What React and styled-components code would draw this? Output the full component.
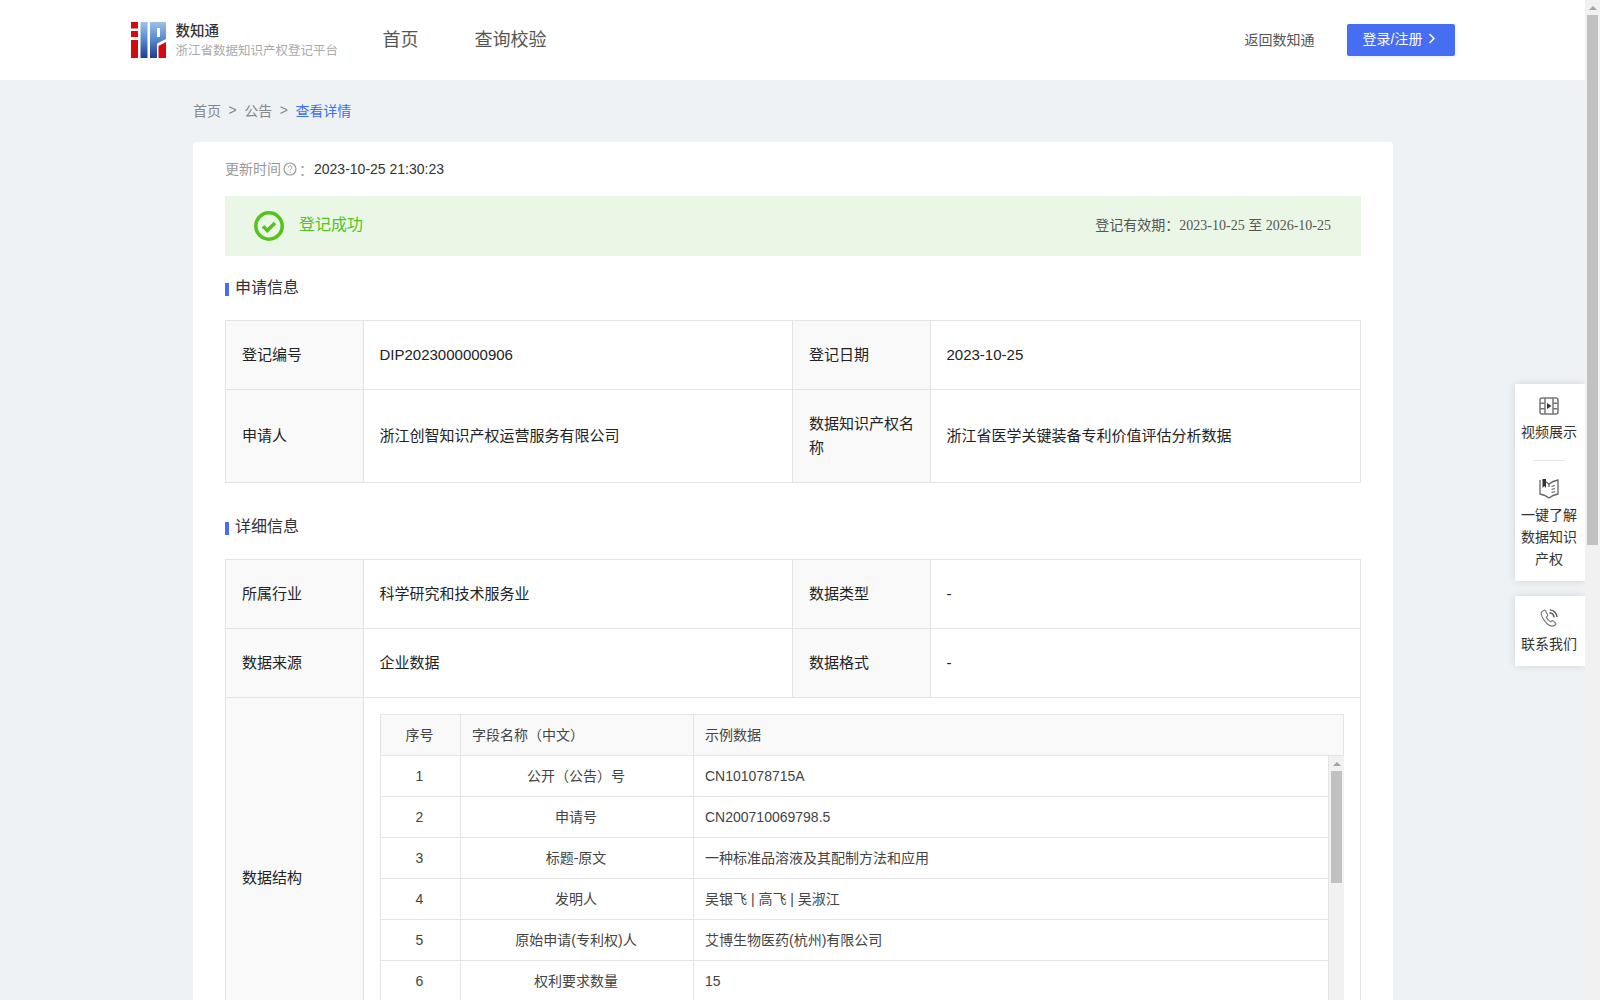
import React from 'react';
import styled, { createGlobalStyle } from 'styled-components';

const Global = createGlobalStyle`
  html, body { margin: 0; padding: 0; height: 100%; overflow: hidden; }
  body { font-family: "Liberation Sans", "Noto Sans CJK SC", sans-serif; color: #333; }
  #root { height: 100%; }
`;
const Shell = styled.div`display: flex; height: 1000px; overflow: hidden; background: #eef2f5;`;
const Page = styled.div`position: relative; flex: 1; min-width: 0; height: 1000px; overflow: hidden;`;
const PageBar = styled.div`flex: none; width: 15px; background: #f1f1f1; display: flex; flex-direction: column; align-items: center;`;
const ArrowBox = styled.div`height: 15px; width: 100%; flex: none; display: flex; align-items: center; justify-content: center;`;
const UpArrow = styled.i`width: 0; height: 0; border-left: 4px solid transparent; border-right: 4px solid transparent; border-bottom: 4px solid ${p => p.$c};`;
const PageThumb = styled.div`width: 11px; height: 530px; background: #c1c1c1;`;
const Header = styled.header`height: 80px; background: #fff; display: flex; justify-content: center;`;
const HeaderInner = styled.div`width: 1324px; display: flex; align-items: center; box-sizing: border-box;`;
const Brand = styled.div`display: flex; align-items: center; gap: 10px; width: 252px; flex: none;`;
const BrandText = styled.div`display: flex; flex-direction: column; white-space: nowrap; padding-top: 2px;`;
const BrandName = styled.div`font-size: 14.5px; line-height: 20px; color: #333; font-weight: 500;`;
const BrandSub = styled.div`font-size: 12.5px; line-height: 21px; color: #aaa;`;
const Nav = styled.nav`display: flex; gap: 56px; flex: 1; padding-bottom: 4px;`;
const NavLink = styled.a`font-size: 18px; color: #555;`;
const BackLink = styled.a`font-size: 14px; color: #555; margin-right: 32px; padding-bottom: 2px;`;
const LoginBtn = styled.button`width: 108px; height: 32px; padding: 0 2px 4px 0; border: 0; border-radius: 2px; background: #456ef2; color: #fff; font: 14px "Liberation Sans", "Noto Sans CJK SC", sans-serif; display: flex; align-items: center; justify-content: center; gap: 6px; box-shadow: 0 2px 4px rgba(69,110,242,.1);`;
const Main = styled.main`width: 1200px; margin-left: 193px;`;
const Crumbs = styled.div`height: 62px; box-sizing: border-box; padding-bottom: 3px; display: flex; align-items: center; gap: 7.5px; font-size: 14px; color: #888;`;
const Crumb = styled.span`color: ${p => p.$active ? '#3b6ff5' : '#888'};`;
const Card = styled.section`background: #fff; border-radius: 4px; padding: 16px 32px 0;`;
const Updated = styled.div`display: flex; align-items: center; height: 22px; font-size: 14px; color: #999; margin-bottom: 16px;`;
const UpdatedLabel = styled.span`margin-bottom: 2px;`;
const UpdatedValue = styled.span`color: #333; margin-left: 1px;`;
const Status = styled.div`height: 60px; background: #ebf7e6; display: flex; align-items: center; justify-content: space-between; padding: 0 30px 0 29px;`;
const StatusLeft = styled.div`display: flex; align-items: center; gap: 15px; font-size: 16px; color: #52c41a;`;
const StatusText = styled.span`margin-bottom: 6px;`;
const Validity = styled.div`font-size: 14px; color: #555; margin-bottom: 5px;`;
const SerifDate = styled.span`font-family: "Liberation Serif", "Noto Sans CJK SC", serif;`;
const SectionTitle = styled.h3`margin: 0; font-weight: 400; font-size: 16px; line-height: 24px; color: #333; display: flex; align-items: center; gap: 6px; padding-top: ${p => p.$top}px; padding-bottom: 20px;`;
const TitleMark = styled.i`width: 4px; height: 13px; background: #456ef2; margin-top: 3px;`;
const InfoTable = styled.div`display: grid; grid-template-columns: 138px 429px 138px 1fr; border: solid #e4e4e4; border-width: 1px 0 0 1px;`;
const Label = styled.div`background: #f9f9f9; border: solid #e4e4e4; border-width: 0 1px 1px 0; padding: 0 16px 1px; font-size: 15px; line-height: 24px; color: #222; display: flex; align-items: center; box-sizing: border-box; height: ${p => p.$h || 69}px;`;
const Value = styled.div`border: solid #e4e4e4; border-width: 0 1px 1px 0; padding: 0 16px ${p => p.$latin ? 2 : 4}px 15.5px; font-size: 15px; color: #222; display: flex; align-items: center; box-sizing: border-box;`;
const WideValue = styled.div`grid-column: span 3; border-right: 1px solid #e4e4e4; padding: 16px 16px 0 16px; min-width: 0;`;
const Structure = styled.div`border: solid #e4e4e4; border-width: 1px 0 0 1px; width: 964px; box-sizing: border-box;`;
const StructHead = styled.div`display: grid; grid-template-columns: 79px 233px 1fr; height: 40px; background: #f9f9f9; border: solid #e4e4e4; border-width: 0 1px 1px 0;`;
const HeadCell = styled.div`display: flex; align-items: center; justify-content: ${p => p.$center ? 'center' : 'flex-start'}; padding: ${p => p.$center ? '0 2px 2px 0' : '0 11px 2px'}; font-size: 14px; color: #444; border-left: ${p => p.$first ? 0 : '1px solid #e4e4e4'};`;
const StructBody = styled.div`display: flex;`;
const Rows = styled.div`flex: 1; min-width: 0;`;
const Row = styled.div`display: grid; grid-template-columns: 79px 233px 1fr; height: 40px; border-bottom: 1px solid #e4e4e4;`;
const Cell = styled.div`display: flex; align-items: center; justify-content: ${p => p.$center ? 'center' : 'flex-start'}; padding: 0 ${p => p.$center ? 2 : 11}px ${p => p.$lift ? 3 : 0}px ${p => p.$center ? 0 : 11}px; font-size: 14px; color: #444; border-left: ${p => p.$first ? 0 : '1px solid #e4e4e4'};`;
const InnerBar = styled.div`width: 15px; flex: none; background: #f1f1f1; border-left: 1px solid #e4e4e4; display: flex; flex-direction: column; align-items: center;`;
const InnerThumb = styled.div`width: 11px; height: 112px; background: #c1c1c1;`;
const Float = styled.aside`position: absolute; right: 0; top: 384px; width: 70px; display: flex; flex-direction: column; gap: 15px;`;
const FloatCard = styled.div`background: #fff; box-shadow: 0 0 8px rgba(0,0,0,.12); padding: 12px 2px 11px 0; display: flex; flex-direction: column; align-items: center;`;
const FloatItem = styled.div`display: flex; flex-direction: column; align-items: center; width: 56px;`;
const FloatText = styled.div`font-size: 14px; line-height: 22px; color: #333; text-align: center; margin-top: 5px;`;
const FloatRule = styled.hr`width: 32px; border: 0; border-top: 1px solid #e4e4e4; margin: 17px 0 17px;`;

const Logo = () => (
  <svg width="35" height="36" viewBox="0 0 35 36">
    <defs>
      <linearGradient id="lg" x1="0" y1="0" x2="0" y2="1">
        <stop offset="0" stopColor="#9cc0ea" />
        <stop offset=".5" stopColor="#5687cb" />
        <stop offset="1" stopColor="#1f3d8e" />
      </linearGradient>
    </defs>
    <path d="M0 0h7v6.500H0zM0 9h7v6H0zM0 18h7v18H0z" fill="#d40a0e" />
    <path d="M9.500 0h7v36h-7z" fill="url(#lg)" />
    <path fillRule="evenodd" d="M19 0h16v17l-9 4.500V36h-7zM26 6v9h3V6z" fill="url(#lg)" />
    <path d="M27.500 36V24l7.500-4v16z" fill="#d40a0e" />
  </svg>
);
const HelpIcon = () => (
  <svg width="14" height="14" viewBox="0 0 14 14" fill="none" stroke="#999" style={{ margin: '0 2px' }}>
    <circle cx="7" cy="7" r="6" strokeWidth="1.200" />
    <path d="M5.200 5.600a1.800 1.800 0 1 1 2.800 1.500c-.6.400-1 .7-1 1.500" />
    <path d="M7 9.600v1.100" />
  </svg>
);
const SuccessIcon = () => (
  <svg width="30" height="30" viewBox="0 0 30 30" fill="none" stroke="#52c41a">
    <circle cx="15" cy="15" r="13.200" strokeWidth="3.500" />
    <path d="M9 15.200l4.300 4.300 7.700-7.500" strokeWidth="3.500" />
  </svg>
);
const Chevron = () => (
  <svg width="8" height="11" viewBox="0 0 8 11" fill="none" stroke="#fff" strokeWidth="1.500"><path d="M1.500 1l4.500 4.500L1.500 10" /></svg>
);
const FilmIcon = () => (
  <svg width="20" height="20" viewBox="0 0 20 20" fill="none" stroke="#777" strokeWidth="1.500">
    <rect x="1" y="2" width="18" height="16" rx="2" />
    <path d="M6 2v16M14 2v16M1 7.300h5M1 12.700h5M14 7.300h5M14 12.700h5" />
    <path d="M8 7l4.500 3L8 13z" fill="#333" stroke="none" />
  </svg>
);
const BookIcon = () => (
  <svg width="20" height="21" viewBox="0 0 20 21" fill="none" stroke="#666" strokeWidth="1.300">
    <path d="M1 2v14c3 .6 6.500 2 9 4 2.500-2 6-3.400 9-4V2c-3 .5-6 1.500-9 4C8 4.500 6 3 3.500 2" />
    <path d="M10 6v3M12.500 8.500l3.500-1M12.500 11.500l3.500-1M12.500 14.500l3.500-1" />
    <path d="M3.500 1h3.500v9L5.200 8 3.500 10z" fill="#333" stroke="none" />
  </svg>
);
const PhoneIcon = () => (
  <svg width="20" height="20" viewBox="0 0 20 21" fill="none" stroke="#777" strokeWidth="1.200">
    <path d="M4.500 2.500L2.300 4c-1 1.500 0 5.200 3 9.200s6.500 6.300 9 5.800l2.400-1.500c.7-.6.500-1.300 0-1.800l-2.300-2.100c-.6-.4-1.200-.4-1.700 0l-1 .9c-1.600-.6-3.800-3-4.500-5l1-1c.4-.5.4-1.100.1-1.700L6.200 2.900C5.700 2.300 5.100 2.100 4.500 2.500z" />
    <path d="M10.500 5c2.500.2 4.500 2.200 4.800 4.800M10.800 2c4 .2 7.200 3.500 7.600 7.500" strokeWidth="1.500" stroke="#555" />
  </svg>
);

const rows = [
  ['1', '公开（公告）号', 'CN101078715A'],
  ['2', '申请号', 'CN200710069798.5'],
  ['3', '标题-原文', '一种标准品溶液及其配制方法和应用'],
  ['4', '发明人', '吴银飞 | 高飞 | 吴淑江'],
  ['5', '原始申请(专利权)人', '艾博生物医药(杭州)有限公司'],
  ['6', '权利要求数量', '15'],
];
const hasCjk = s => /[\u4e00-\u9fff]/.test(s);

export default function App() {
  return (
    <Shell>
      <Global />
      <Page>
        <Header>
          <HeaderInner>
            <Brand>
              <Logo />
              <BrandText>
                <BrandName>数知通</BrandName>
                <BrandSub>浙江省数据知识产权登记平台</BrandSub>
              </BrandText>
            </Brand>
            <Nav>
              <NavLink>首页</NavLink>
              <NavLink>查询校验</NavLink>
            </Nav>
            <BackLink>返回数知通</BackLink>
            <LoginBtn>登录/注册 <Chevron /></LoginBtn>
          </HeaderInner>
        </Header>
        <Main>
          <Crumbs>
            <Crumb>首页</Crumb><Crumb>&gt;</Crumb><Crumb>公告</Crumb><Crumb>&gt;</Crumb><Crumb $active>查看详情</Crumb>
          </Crumbs>
          <Card>
            <Updated><UpdatedLabel>更新时间</UpdatedLabel><HelpIcon />：<UpdatedValue>2023-10-25 21:30:23</UpdatedValue></Updated>
            <Status>
              <StatusLeft><SuccessIcon /><StatusText>登记成功</StatusText></StatusLeft>
              <Validity>登记有效期：<SerifDate>2023-10-25 至 2026-10-25</SerifDate></Validity>
            </Status>
            <SectionTitle $top={20}><TitleMark />申请信息</SectionTitle>
            <InfoTable>
              <Label>登记编号</Label><Value $latin>DIP2023000000906</Value>
              <Label>登记日期</Label><Value $latin>2023-10-25</Value>
              <Label $h={93}>申请人</Label><Value>浙江创智知识产权运营服务有限公司</Value>
              <Label $h={93}>数据知识产权名称</Label><Value>浙江省医学关键装备专利价值评估分析数据</Value>
            </InfoTable>
            <SectionTitle $top={32}><TitleMark />详细信息</SectionTitle>
            <InfoTable>
              <Label>所属行业</Label><Value>科学研究和技术服务业</Value>
              <Label>数据类型</Label><Value $latin>-</Value>
              <Label>数据来源</Label><Value>企业数据</Value>
              <Label>数据格式</Label><Value $latin>-</Value>
              <Label $h={362}>数据结构</Label>
              <WideValue>
                <Structure>
                  <StructHead>
                    <HeadCell $first $center>序号</HeadCell>
                    <HeadCell>字段名称（中文）</HeadCell>
                    <HeadCell>示例数据</HeadCell>
                  </StructHead>
                  <StructBody>
                    <Rows>
                      {rows.map(r => (
                        <Row key={r[0]}>
                          <Cell $first $center>{r[0]}</Cell>
                          <Cell $center $lift>{r[1]}</Cell>
                          <Cell $lift={hasCjk(r[2])}>{r[2]}</Cell>
                        </Row>
                      ))}
                    </Rows>
                    <InnerBar>
                      <ArrowBox><UpArrow $c="#a3a3a3" /></ArrowBox>
                      <InnerThumb />
                    </InnerBar>
                  </StructBody>
                </Structure>
              </WideValue>
            </InfoTable>
          </Card>
        </Main>
        <Float>
          <FloatCard>
            <FloatItem><FilmIcon /><FloatText>视频展示</FloatText></FloatItem>
            <FloatRule />
            <FloatItem><BookIcon /><FloatText>一键了解数据知识产权</FloatText></FloatItem>
          </FloatCard>
          <FloatCard>
            <FloatItem><PhoneIcon /><FloatText>联系我们</FloatText></FloatItem>
          </FloatCard>
        </Float>
      </Page>
      <PageBar>
        <ArrowBox><UpArrow $c="#a3a3a3" /></ArrowBox>
        <PageThumb />
      </PageBar>
    </Shell>
  );
}
